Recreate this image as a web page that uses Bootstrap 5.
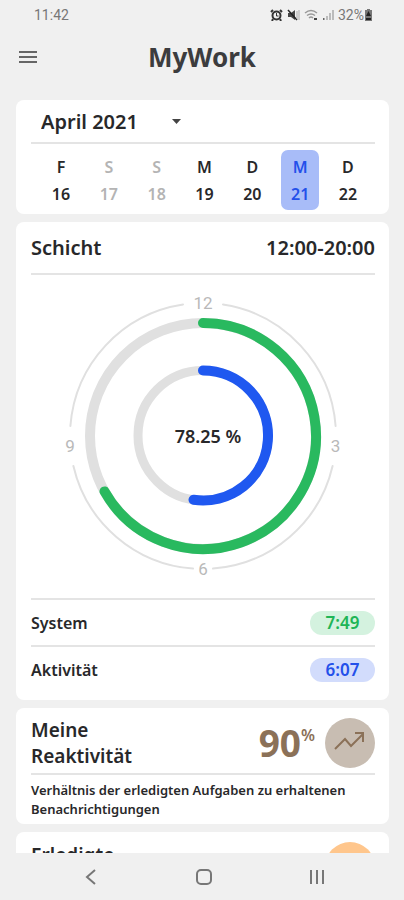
<!DOCTYPE html>
<html lang="de">
<head>
<meta charset="utf-8">
<meta name="viewport" content="width=device-width, initial-scale=1">
<title>MyWork</title>
<link href="https://cdn.jsdelivr.net/npm/bootstrap@5.3.0/dist/css/bootstrap.min.css" rel="stylesheet">
<style>
body{background:#f0f0f0;color:#28282a;font-family:"Noto Sans","Open Sans",sans-serif;font-weight:600}
.statusbar{height:30px;padding:0 31px 0 34px;font:400 14px/30px Roboto,sans-serif;color:#777}
.topbar{height:54px}
.topbar h1{font-size:26px;line-height:54px;color:#3c3c3e}
.menu-btn{width:24px;left:16px}
.content{padding:16px 15px 0 16px}
.panel{background:#fff;border-radius:8px;padding:0 14px 0 15px;margin-bottom:8px}
.rule{border-top:2px solid #e4e4e4}
.month{appearance:none;border:0;background:transparent;color:inherit;font-weight:600;font-size:20px;line-height:26px;width:152px;padding:2px 0 0 10px;height:42px}
.caret{left:141px;top:19px}
.days{padding:6px 8px 4px 11px}
.day{border:0;background:transparent;border-radius:7px;width:38px;height:60px;padding:4px 0 2px;font-size:16px;font-weight:600;line-height:27px;color:#28282a}
.day.off{color:#b4b4b4}
.day.on{background:#a8bcf8;color:#2350ea}
.shift{font-size:20px;line-height:50px;padding-top:1px}
.dial{padding:14px 0 15px}
.dial svg{width:294px;max-width:100%}
.hour{font:400 17px Roboto,sans-serif;fill:#b9b9b9}
.percent{font:600 18px "Noto Sans",sans-serif;fill:#28282a}
.metric{height:45px;font-size:16px}
.pill{width:65px;line-height:24px;border-radius:12px;font-size:17px;font-weight:600;text-align:center}
.pill-green{background:#d4f2df;color:#20b556}
.pill-blue{background:#d2dcfc;color:#2350ea}
.stat-head{height:65px}
.stat-head h2{font-size:19px;line-height:26px}
.stat-head.brief{padding-top:10px}
.score{font-size:37px;line-height:50px;font-weight:700;color:#8b7158}
.score sup{font-size:16px;font-weight:600;top:-16px}
.score-row{gap:10px}
.disc{width:50px;height:50px;background:#c8bdb2}
.disc.orange{background:#ffc68c}
.note{font-size:13px;line-height:19px;padding:6px 0 5px}
.sysnav{height:47px;padding:0 31px 0 35px;background:#f0f0f0}
</style>
<script src="https://cdn.jsdelivr.net/npm/bootstrap@5.3.0/dist/js/bootstrap.bundle.min.js"></script>
</head>
<body>
<div class="d-flex flex-column vh-100 overflow-hidden">
  <div class="statusbar d-flex justify-content-between flex-shrink-0">
    <span>11:42</span>
    <span class="d-flex align-items-center">
      <svg class="me-1" width="13" height="12" viewBox="0 0 13 12" fill="none" stroke="#333" stroke-width="2"><circle cx="6.500" cy="6.500" r="4"/><path d="M1 3l2-2M12 3l-2-2M3 10l-1 2M10 10l1 2"/><path d="M6.500 4v3h2" stroke-width="1"/></svg>
      <svg class="me-1" width="13" height="12" viewBox="0 0 13 12"><path d="M1 4h3l4-3v10L4 8H1z" fill="#444"/><path d="M1 1l9 10" stroke="#222" stroke-width="1.500"/><path d="M10 2v8M12 1v10" stroke="#aaa"/></svg>
      <svg class="me-1" width="14" height="12" viewBox="0 0 14 12" fill="none" stroke="#999" stroke-width="1.500"><path d="M1 4q6-5 12 0M3 6.500q4-3 8 0M5 9q2-2 4 0"/><path d="M10 10h3" stroke="#444" stroke-width="2"/></svg>
      <svg class="me-1" width="12" height="12" viewBox="0 0 12 12"><path d="M1 9h1.500v2H1z" fill="#666"/><path d="M4 7h2v4H4zM7 4h2v7H7zM10 1h2v10h-2z" fill="#bbb"/></svg>
      <span>32%</span>
      <svg width="9" height="12" viewBox="0 0 9 12"><path d="M3 0h3v1h2v11H1V1h2z" fill="#777"/><path d="M4.500 2L2 7h5zM2 9h5v2H2z" fill="#222"/></svg>
    </span>
  </div>
  <header class="topbar position-relative text-center flex-shrink-0">
    <button type="button" class="menu-btn btn p-0 border-0 h-100 position-absolute top-0 d-flex align-items-center justify-content-center" aria-label="Menü">
      <svg width="18" height="14" viewBox="0 0 18 14"><path d="M0 2h18M0 7h18M0 12h18" stroke="#666" stroke-width="2"/></svg>
    </button>
    <h1 class="m-0 fw-bold">MyWork</h1>
  </header>
  <main class="content flex-grow-1 overflow-hidden">
    <section class="panel">
      <div class="position-relative">
        <select class="month d-block" aria-label="Monat"><option>April 2021</option></select>
        <svg class="caret position-absolute pe-none" width="9" height="5" viewBox="0 0 9 5"><path d="M0 0h9L4.500 5z" fill="#444"/></svg>
      </div>
      <div class="rule"></div>
      <div class="days d-flex justify-content-between">
        <button type="button" class="day">F<br>16</button>
        <button type="button" class="day off">S<br>17</button>
        <button type="button" class="day off">S<br>18</button>
        <button type="button" class="day">M<br>19</button>
        <button type="button" class="day">D<br>20</button>
        <button type="button" class="day on">M<br>21</button>
        <button type="button" class="day">D<br>22</button>
      </div>
    </section>
    <section class="panel pb-2">
      <div class="shift d-flex justify-content-between"><span>Schicht</span><span>12:00-20:00</span></div>
      <div class="rule"></div>
      <div class="dial text-center">
        <svg class="d-block mx-auto" viewBox="56 289 294 294" role="img" aria-label="78.25 %">
          <g fill="none" stroke-linecap="round">
            <g stroke="#e0e0e0">
              <path d="M223 304.500A133 133 0 0 1 335.600 426M332.600 466A133 133 0 0 1 213 568.600M193 568.600A133 133 0 0 1 73.400 466M70.400 426A133 133 0 0 1 183 304.500" stroke-width="2"/>
              <circle cx="203" cy="436" r="113" stroke-width="10"/>
              <circle cx="203" cy="435.500" r="65" stroke-width="9"/>
            </g>
            <path d="M203 323A113 113 0 1 1 104.500 491.400" stroke="#29b95f" stroke-width="10"/>
            <path d="M203 370.500A65 65 0 1 1 193.500 499.800" stroke="#1f58f0" stroke-width="10"/>
          </g>
          <g class="hour" text-anchor="middle">
            <text x="203" y="309">12</text><text x="335.500" y="452">3</text><text x="203" y="575">6</text><text x="70" y="452">9</text>
          </g>
          <text class="percent" x="208" y="443" text-anchor="middle">78.25 %</text>
        </svg>
      </div>
      <div class="rule"></div>
      <div class="metric d-flex align-items-center justify-content-between"><span>System</span><span class="pill pill-green">7:49</span></div>
      <div class="rule"></div>
      <div class="metric d-flex align-items-center justify-content-between"><span>Aktivität</span><span class="pill pill-blue">6:07</span></div>
    </section>
    <section class="panel">
      <div class="stat-head d-flex align-items-center justify-content-between pt-1">
        <h2 class="m-0 fw-semibold">Meine<br>Reaktivität</h2>
        <div class="score-row d-flex align-items-center">
          <span class="score">90<sup>%</sup></span>
          <span class="disc rounded-circle d-flex align-items-center justify-content-center">
            <svg width="32" height="24" viewBox="0 0 32 24" fill="none" stroke="#8b7158" stroke-width="2"><path d="M1 18l10-10 6 7L29 3M21 2h8v9"/></svg>
          </span>
        </div>
      </div>
      <div class="rule"></div>
      <p class="note m-0">Verhältnis der erledigten Aufgaben zu erhaltenen Benachrichtigungen</p>
    </section>
    <section class="panel">
      <div class="stat-head brief d-flex align-items-start justify-content-between">
        <h2 class="m-0 fw-semibold">Erledigte</h2>
        <span class="disc orange rounded-circle"></span>
      </div>
    </section>
  </main>
  <nav class="sysnav d-flex justify-content-around align-items-center flex-shrink-0" aria-label="System">
    <button type="button" class="btn p-0 border-0" aria-label="Zurück"><svg class="d-block" width="18" height="18" viewBox="0 0 18 18" fill="none" stroke="#777" stroke-width="2"><path d="M13 2L5 9l8 7"/></svg></button>
    <button type="button" class="btn p-0 border-0" aria-label="Start"><svg class="d-block" width="18" height="18" viewBox="0 0 18 18" fill="none" stroke="#777" stroke-width="2"><rect x="2" y="2" width="14" height="14" rx="4"/></svg></button>
    <button type="button" class="btn p-0 border-0" aria-label="Übersicht"><svg class="d-block" width="18" height="18" viewBox="0 0 18 18" stroke="#777" stroke-width="2"><path d="M3 2v14M9 2v14M15 2v14"/></svg></button>
  </nav>
</div>
</body>
</html>
